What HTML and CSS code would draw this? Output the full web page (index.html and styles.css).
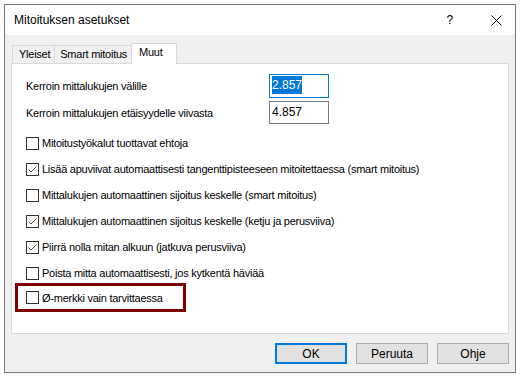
FILE: index.html
```html
<!DOCTYPE html>
<html lang="fi">

<head>
    <meta charset="UTF-8">
    <title>Mitoituksen asetukset</title>
    <link rel="stylesheet" href="styles.css">
</head>

<body>
    <div class="window">
        <div class="titlebar">
            <span class="title">Mitoituksen asetukset</span>
            <span class="help">?</span>
            <svg class="close" width="11" height="11" viewBox="0 0 11 11">
                <path d="M0.5 0.5 L10.5 10.5 M10.5 0.5 L0.5 10.5" stroke="#000" stroke-width="1" fill="none"/>
            </svg>
        </div>

        <div class="client">
            <div class="tabs">
                <div class="tab">Yleiset</div>
                <div class="tab">Smart mitoitus</div>
                <div class="tab active">Muut</div>
            </div>

            <div class="panel">
                <div class="fields">
                    <label class="field-label">Kerroin mittalukujen välille</label>
                    <div class="input focused"><span class="selected">2.857</span></div>
                    <label class="field-label">Kerroin mittalukujen etäisyydelle viivasta</label>
                    <div class="input">4.857</div>
                </div>

                <div class="checks">
                    <div class="check"><span class="box"></span>Mitoitustyökalut tuottavat ehtoja</div>
                    <div class="check"><span class="box checked"><svg width="11" height="11" viewBox="0 0 11 11"><path d="M1.5 5.5 L4 8 L9.5 2.5" stroke="#444" stroke-width="1" fill="none"/></svg></span>Lisää apuviivat automaattisesti tangenttipisteeseen mitoitettaessa (smart mitoitus)</div>
                    <div class="check"><span class="box"></span>Mittalukujen automaattinen sijoitus keskelle (smart mitoitus)</div>
                    <div class="check"><span class="box checked"><svg width="11" height="11" viewBox="0 0 11 11"><path d="M1.5 5.5 L4 8 L9.5 2.5" stroke="#444" stroke-width="1" fill="none"/></svg></span>Mittalukujen automaattinen sijoitus keskelle (ketju ja perusviiva)</div>
                    <div class="check"><span class="box checked"><svg width="11" height="11" viewBox="0 0 11 11"><path d="M1.5 5.5 L4 8 L9.5 2.5" stroke="#444" stroke-width="1" fill="none"/></svg></span>Piirrä nolla mitan alkuun (jatkuva perusviiva)</div>
                    <div class="check"><span class="box"></span>Poista mitta automaattisesti, jos kytkentä häviää</div>
                    <div class="check highlight"><span class="box"></span>Ø-merkki vain tarvittaessa</div>
                </div>
            </div>

            <div class="buttons">
                <button class="btn default">OK</button>
                <button class="btn">Peruuta</button>
                <button class="btn">Ohje</button>
            </div>
        </div>
    </div>
</body>

</html>
```

FILE: styles.css
```css
body {
    margin: 0;
    padding: 4px;
    background-color: #fff;
    font-family: "Liberation Sans", Arial, sans-serif;
    font-size: 11px;
    letter-spacing: -0.25px;
    color: #000;
}

.window {
    width: 512px;
    height: 369px;
    box-sizing: border-box;
    border: 1px solid #7a7a7a;
    display: flex;
    flex-direction: column;
    background-color: #f0f0f0;
}

.titlebar {
    height: 30px;
    background-color: #fff;
    display: flex;
    align-items: center;
    padding-left: 9px;
}

.title {
    font-size: 12px;
    letter-spacing: 0;
    flex: 1;
}

.help {
    font-size: 12px;
    margin-right: 38px;
}

.close {
    margin-right: 13px;
}

.client {
    flex: 1;
    padding: 8px 6px 0 6px;
    display: flex;
    flex-direction: column;
}

.tabs {
    display: flex;
    align-items: flex-end;
    height: 20px;
    padding-left: 1px;
    position: relative;
    z-index: 1;
}

.tab {
    height: 18px;
    box-sizing: border-box;
    border: 1px solid #d9d9d9;
    border-bottom: none;
    background-color: #f0f0f0;
    padding: 0 4px 0 6px;
    line-height: 17px;
    margin-right: -1px;
}

.tab + .tab {
    padding: 0 4px 0 5px;
}

.tab.active {
    height: 21px;
    margin-bottom: -1px;
    background-color: #fff;
    padding: 0 13px 0 7px;
    line-height: 16px;
}

.panel {
    height: 271px;
    box-sizing: border-box;
    background-color: #fff;
    border: 1px solid #d9d9d9;
    padding: 10px 0 0 14px;
}

.fields {
    display: grid;
    grid-template-columns: 243px 60px;
    row-gap: 3px;
    align-items: center;
}

.input {
    height: 24px;
    box-sizing: border-box;
    border: 1px solid #7a7a7a;
    padding: 0 2px;
    font-size: 12px;
    letter-spacing: 0;
    line-height: 20px;
}

.input.focused {
    border-color: #0078d7;
}

.input + .field-label + .input {
    height: 23px;
}

.selected {
    background-color: #0078d7;
    color: #fff;
    padding: 2px 0;
}

.checks {
    margin-top: 6px;
    display: flex;
    flex-direction: column;
}

.check {
    height: 26px;
    display: flex;
    align-items: center;
}

.box {
    width: 13px;
    height: 13px;
    box-sizing: border-box;
    border: 1px solid #333;
    background-color: #fff;
    margin-right: 3px;
    display: flex;
    align-items: center;
    justify-content: center;
}

.check.highlight {
    width: 171px;
    height: 29px;
    box-sizing: border-box;
    border: 3px solid #800000;
    margin: -3px 0 0 -11px;
    padding-left: 8px;
}

.buttons {
    display: flex;
    justify-content: flex-end;
    gap: 9px;
    margin-top: 9px;
}

.btn {
    width: 72px;
    height: 21px;
    box-sizing: border-box;
    border: 1px solid #adadad;
    background-color: #e1e1e1;
    font-family: inherit;
    font-size: 12px;
    letter-spacing: 0;
    padding: 0;
}

.btn.default {
    border: 2px solid #0078d7;
}
```
